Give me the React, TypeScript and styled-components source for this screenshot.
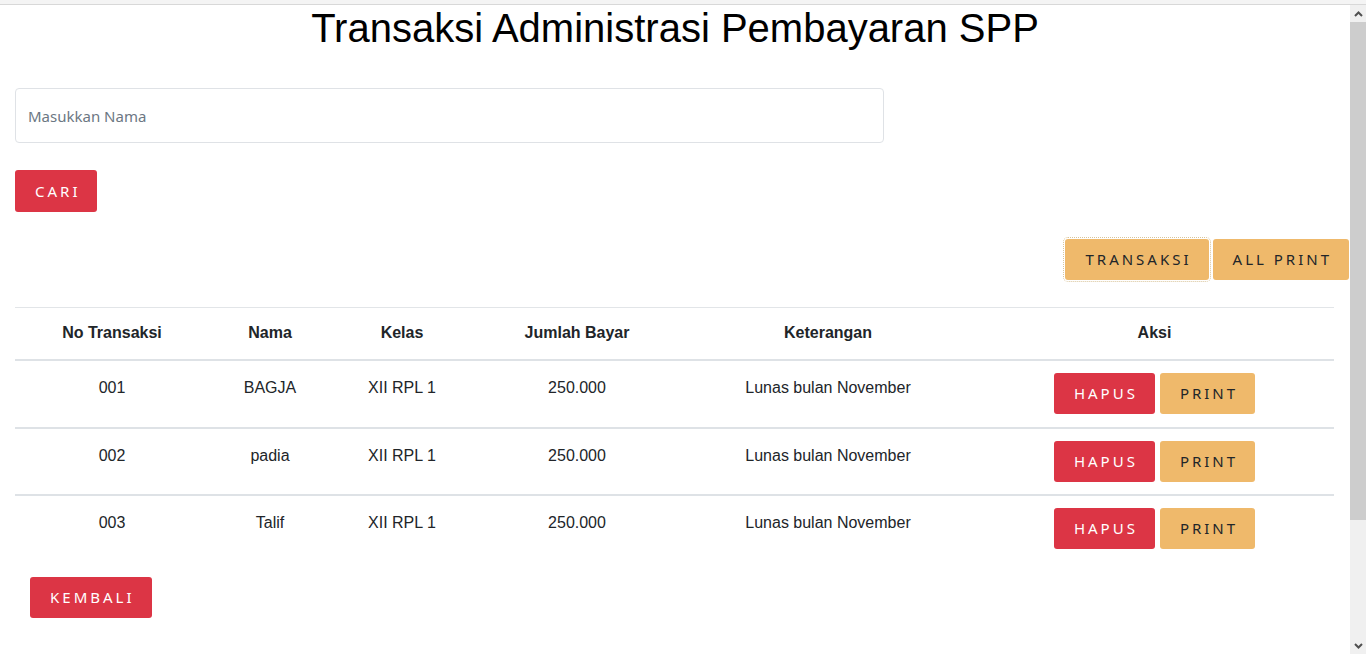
import React from "react";
import styled, { createGlobalStyle, css } from "styled-components";

const GlobalStyle = createGlobalStyle`
  html, body { margin: 0; padding: 0; height: 100%; overflow: hidden; background: #fff; }
  #root { height: 100%; }
  * { box-sizing: border-box; }
`;

const Shell = styled.div`
  height: 100vh;
  display: flex;
  flex-direction: column;
`;

const BrowserStrip = styled.div`
  height: 5px;
  flex: none;
  background: #f4f4f4;
  border-bottom: 1px solid #d8d8d8;
`;

const Body = styled.div`
  flex: 1;
  display: flex;
  min-height: 0;
`;

const Viewport = styled.div`
  flex: 1;
  overflow: hidden;
  background: #fff;
`;

const Scrollbar = styled.div`
  width: 16px;
  flex: none;
  display: flex;
  flex-direction: column;
  background: #f0f0f0;
`;

const ScrollArrow = styled.div`
  height: 17px;
  flex: none;
  display: flex;
  align-items: center;
  justify-content: center;
  background: #f0f0f0;
`;

const ScrollThumb = styled.div`
  height: 498px;
  flex: none;
  background: #cdcdcd;
`;

const ScrollTrack = styled.div`
  flex: 1;
`;

const Chevron = ({ down }: { down?: boolean }) => (
  <svg width="9" height="6" viewBox="0 0 9 6">
    <polyline
      points={down ? "1,1 4.5,4.5 8,1" : "1,5 4.5,1.5 8,5"}
      fill="none"
      stroke="#505050"
      strokeWidth="2"
    />
  </svg>
);

const Page = styled.div`
  font-family: "Liberation Sans", Arial, sans-serif;
  color: #212529;
`;

const Title = styled.h1`
  margin: 0;
  font-family: "Liberation Sans", Arial, sans-serif;
  font-weight: 400;
  font-size: 40px;
  line-height: 46px;
  color: #000;
  text-align: center;
`;

const SearchForm = styled.form`
  display: flex;
  flex-direction: column;
  align-items: flex-start;
  padding-left: 15px;
  margin-top: 37px;
  gap: 27px;
`;

const SearchInput = styled.input`
  width: 869px;
  height: 55px;
  padding: 0 12px;
  border: 1px solid #dfe2e6;
  border-radius: 4px;
  font-family: "Noto Sans", sans-serif;
  font-size: 15px;
  color: #495057;
  outline: none;
  &::placeholder { color: #6c7783; }
`;

type Tone = "danger" | "warning";

const Button = styled.button<{ $tone: Tone; $tall?: boolean; $focused?: boolean }>`
  height: ${(p) => (p.$tall ? 42 : 41)}px;
  padding: 0 17px 0 20px;
  border: none;
  border-radius: 3px;
  font-family: "Noto Sans", sans-serif;
  font-size: 15px;
  letter-spacing: 3px;
  line-height: 1;
  cursor: pointer;
  ${(p) =>
    p.$tone === "danger"
      ? css`
          background: #dc3545;
          color: #fff;
        `
      : css`
          background: #efb96b;
          color: #212529;
        `}
  ${(p) =>
    p.$focused &&
    css`
      outline: 1px dotted #d9c49a;
      outline-offset: 1px;
    `}
`;

const ActionBar = styled.div`
  display: flex;
  justify-content: flex-end;
  gap: 4px;
  margin-top: 27px;
  padding-right: 1px;
`;

const TableWrap = styled.div`
  margin-top: 27px;
  padding: 0 16px 0 15px;
`;

const Table = styled.table`
  width: 1319px;
  border-collapse: collapse;
  table-layout: fixed;
  font-size: 16px;
`;

const HeadCell = styled.th`
  padding: 13px 12px 14px;
  line-height: 24px;
  font-weight: 700;
  text-align: center;
  border-top: 1px solid #e2e5e8;
  border-bottom: 2px solid #dee2e6;
`;

const Row = styled.tr`
  & + & > td { border-top: 2px solid #dee2e6; }
`;

const Cell = styled.td`
  padding: 15px 12px 12px;
  line-height: 24px;
  text-align: center;
  vertical-align: top;
`;

const ActionCell = styled.td`
  padding: 12px 12px 12.5px;
  vertical-align: top;
`;

const ActionGroup = styled.div`
  display: flex;
  justify-content: center;
  gap: 5px;
`;

const Footer = styled.div`
  margin-top: 15px;
  padding-left: 30px;
`;

const columns = [
  { label: "No Transaksi", width: 194 },
  { label: "Nama", width: 122 },
  { label: "Kelas", width: 142 },
  { label: "Jumlah Bayar", width: 208 },
  { label: "Keterangan", width: 294 },
  { label: "Aksi", width: 359 },
];

const rows = [
  { no: "001", nama: "BAGJA", kelas: "XII RPL 1", jumlah: "250.000", ket: "Lunas bulan November" },
  { no: "002", nama: "padia", kelas: "XII RPL 1", jumlah: "250.000", ket: "Lunas bulan November" },
  { no: "003", nama: "Talif", kelas: "XII RPL 1", jumlah: "250.000", ket: "Lunas bulan November" },
];

export default function App() {
  return (
    <Shell>
      <GlobalStyle />
      <BrowserStrip />
      <Body>
        <Viewport>
          <Page>
            <Title>Transaksi Administrasi Pembayaran SPP</Title>
            <SearchForm onSubmit={(e) => e.preventDefault()}>
              <SearchInput placeholder="Masukkan Nama" />
              <Button type="submit" $tone="danger" $tall>
                CARI
              </Button>
            </SearchForm>
            <ActionBar>
              <Button $tone="warning" $focused>
                TRANSAKSI
              </Button>
              <Button $tone="warning">ALL PRINT</Button>
            </ActionBar>
            <TableWrap>
              <Table>
                <colgroup>
                  {columns.map((c) => (
                    <col key={c.label} style={{ width: c.width }} />
                  ))}
                </colgroup>
                <thead>
                  <tr>
                    {columns.map((c) => (
                      <HeadCell key={c.label}>{c.label}</HeadCell>
                    ))}
                  </tr>
                </thead>
                <tbody>
                  {rows.map((r) => (
                    <Row key={r.no}>
                      <Cell>{r.no}</Cell>
                      <Cell>{r.nama}</Cell>
                      <Cell>{r.kelas}</Cell>
                      <Cell>{r.jumlah}</Cell>
                      <Cell>{r.ket}</Cell>
                      <ActionCell>
                        <ActionGroup>
                          <Button $tone="danger">HAPUS</Button>
                          <Button $tone="warning">PRINT</Button>
                        </ActionGroup>
                      </ActionCell>
                    </Row>
                  ))}
                </tbody>
              </Table>
            </TableWrap>
            <Footer>
              <Button $tone="danger">KEMBALI</Button>
            </Footer>
          </Page>
        </Viewport>
        <Scrollbar>
          <ScrollArrow>
            <Chevron />
          </ScrollArrow>
          <ScrollThumb />
          <ScrollTrack />
          <ScrollArrow>
            <Chevron down />
          </ScrollArrow>
        </Scrollbar>
      </Body>
    </Shell>
  );
}
